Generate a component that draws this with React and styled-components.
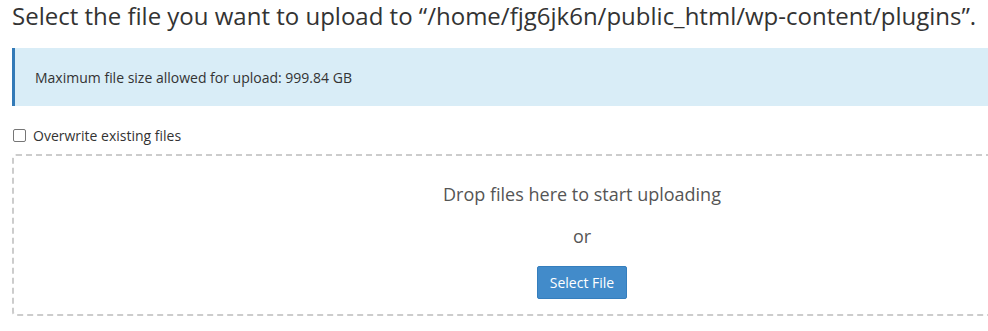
import React from "react";
import styled, { createGlobalStyle } from "styled-components";

const GlobalStyle = createGlobalStyle`
  html, body {
    margin: 0;
    padding: 0;
    background: #ffffff;
    overflow: hidden;
  }
  body {
    font-family: "Open Sans", "Liberation Sans", sans-serif;
    color: #333333;
  }
`;

const Page = styled.div`
  width: 988px;
  height: 331px;
  overflow: hidden;
  padding: 0 0 0 12px;
  box-sizing: border-box;
`;

const Title = styled.h3`
  margin: 0;
  padding-top: 2px;
  font-size: 24px;
  font-weight: 400;
  line-height: 27px;
  color: #333333;
  white-space: nowrap;
`;

const Alert = styled.div`
  margin-top: 19px;
  height: 58px;
  display: flex;
  align-items: center;
  padding-left: 20px;
  background: #d9edf7;
  border-left: 3px solid #337ab7;
  font-size: 14px;
  color: #333333;
`;

const CheckRow = styled.label`
  display: flex;
  align-items: center;
  gap: 7px;
  margin-top: 20px;
  font-size: 14px;
  color: #333333;
  height: 18px;
`;

const Box = styled.span`
  width: 11px;
  height: 11px;
  margin-left: 1px;
  border: 1px solid #767676;
  border-radius: 2px;
  background: #fff;
`;

const DropZone = styled.div`
  margin-top: 10px;
  width: 1140px;
  height: 162px;
  box-sizing: border-box;
  border: 2px dashed #cccccc;
  border-radius: 4px;
  display: flex;
  flex-direction: column;
  align-items: center;
  padding-top: 18px;
  color: #555555;
`;

const DropText = styled.div`
  font-size: 18px;
  line-height: 40px;
`;

const OrText = styled.div`
  font-size: 18px;
  line-height: 24px;
  margin-top: 10px;
`;

const Button = styled.button`
  margin-top: 18px;
  width: 90px;
  height: 33px;
  font-family: "Open Sans", "Liberation Sans", sans-serif;
  font-size: 14px;
  color: #ffffff;
  background: #428bca;
  border: 1px solid #357ebd;
  border-radius: 2px;
  cursor: pointer;
`;

export default function App() {
  return (
    <>
      <GlobalStyle />
      <Page>
        <Title>
          Select the file you want to upload to “/home/fjg6jk6n/public_html/wp-content/plugins”.
        </Title>
        <Alert>Maximum file size allowed for upload: 999.84 GB</Alert>
        <CheckRow>
          <Box />
          Overwrite existing files
        </CheckRow>
        <DropZone>
          <DropText>Drop files here to start uploading</DropText>
          <OrText>or</OrText>
          <Button>Select File</Button>
        </DropZone>
      </Page>
    </>
  );
}
